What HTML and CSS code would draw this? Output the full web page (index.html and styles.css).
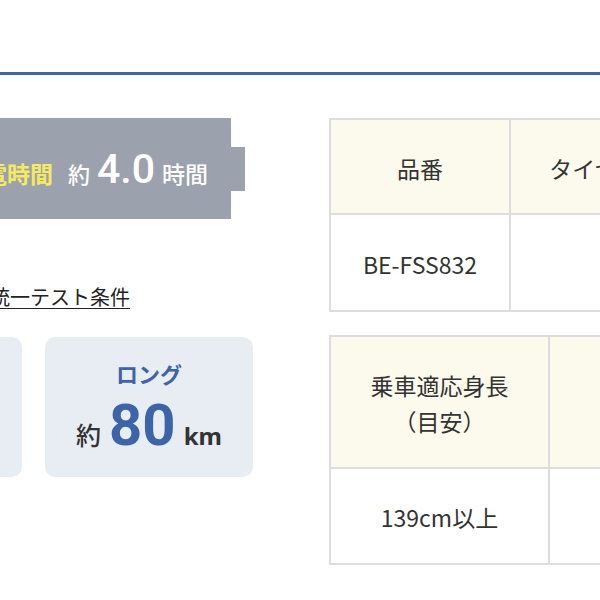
FILE: index.html
```html
<!DOCTYPE html>
<html lang="ja">
<head>
<meta charset="utf-8">
<title>スペック</title>
<link rel="stylesheet" href="styles.css">
</head>
<body>
<div class="topbar"></div>
<div class="main">
  <div class="left">
    <div class="battery">
      <div class="battery-body">
        <div class="battery-text">
          <span class="b-label">充電時間</span>
          <span class="b-about">約</span>
          <span class="b-num">4.0</span>
          <span class="b-unit">時間</span>
        </div>
      </div>
      <div class="battery-tip"></div>
    </div>
    <p class="note"><a class="note-link" href="#">自転車協会統一テスト条件</a></p>
    <div class="cards">
      <div class="card">
        <div class="card-title">オート</div>
        <div class="card-value"><span class="c-about">約</span><span class="c-num">60</span><span class="c-unit">km</span></div>
      </div>
      <div class="card">
        <div class="card-title">ロング</div>
        <div class="card-value"><span class="c-about">約</span><span class="c-num">80</span><span class="c-unit">km</span></div>
      </div>
    </div>
  </div>
  <div class="right">
    <table class="spec spec-1">
      <tr class="head"><td class="c1">品番</td><td class="c2">タイヤサイズ（インチ）</td></tr>
      <tr class="body"><td class="c1">BE-FSS832</td><td class="c2">26</td></tr>
    </table>
    <table class="spec spec-2">
      <tr class="head"><td class="c1">乗車適応身長<br>（目安）</td><td class="c2">車体重量</td></tr>
      <tr class="body"><td class="c1">139cm以上</td><td class="c2">25.9kg</td></tr>
    </table>
  </div>
</div>
</body>
</html>
```
FILE: styles.css
```css
html, body {
  margin: 0;
  padding: 0;
  overflow: hidden;
  background: #ffffff;
  font-family: "Noto Sans CJK JP", "Noto Sans", sans-serif;
  color: #333333;
}

.topbar {
  height: 72px;
  border-bottom: 3px solid #3d63a8;
}

.main {
  display: flex;
  align-items: flex-start;
  margin-left: -186px;
  padding-top: 43px;
}

.left {
  flex: none;
  width: 439px;
}

/* battery banner */
.battery {
  display: flex;
  align-items: center;
}

.battery-body {
  width: 417px;
  height: 101px;
  background: #9ba1ad;
  display: flex;
  align-items: center;
  justify-content: flex-end;
  padding-right: 23px;
  padding-top: 2px;
  box-sizing: border-box;
}

.battery-tip {
  width: 14px;
  height: 44px;
  background: #9ba1ad;
}

.battery-text {
  display: flex;
  align-items: baseline;
  color: #ffffff;
  line-height: 1;
}

.b-label {
  font-size: 23px;
  font-weight: 700;
  color: #f7ea5e;
  margin-right: 15px;
}

.b-about {
  font-size: 22px;
  font-weight: 500;
  margin-right: 7px;
}

.b-num {
  font-family: "Roboto", "Noto Sans", sans-serif;
  font-size: 41px;
  font-weight: 500;
  margin-right: 7px;
}

.b-unit {
  font-size: 23px;
  font-weight: 500;
}

/* note link */
.note {
  margin: 63px 0 0 0;
  padding-left: 76px;
  font-size: 20px;
  line-height: 30px;
}

.note-link {
  color: #222222;
  text-decoration: underline;
  text-underline-offset: 3px;
  text-decoration-thickness: 1px;
}

/* cards */
.cards {
  display: grid;
  grid-template-columns: 208px 208px;
  gap: 23px;
  margin-top: 25px;
}

.card {
  height: 140px;
  background: #e8edf4;
  border-radius: 10px;
  display: flex;
  flex-direction: column;
  align-items: center;
  padding-top: 25px;
  box-sizing: border-box;
}

.card-title {
  font-size: 22px;
  font-weight: 700;
  color: #3d63a8;
  line-height: 1;
}

.card-value {
  display: flex;
  align-items: baseline;
  margin-top: 12px;
  line-height: 1;
}

.c-about {
  font-size: 25px;
  font-weight: 500;
  color: #333333;
  margin-right: 8px;
}

.c-num {
  font-family: "Roboto", "Noto Sans", sans-serif;
  font-size: 58px;
  font-weight: 700;
  color: #3d63a8;
  margin-right: 8px;
}

.c-unit {
  font-family: "Noto Sans", "Roboto", sans-serif;
  font-size: 24px;
  font-weight: 700;
  color: #333333;
}

/* tables */
.right {
  flex: none;
  width: 600px;
  margin-left: 76px;
}

.spec {
  border-collapse: separate;
  border-spacing: 0;
  border-top: 2px solid #dddddd;
  border-left: 2px solid #dddddd;
  table-layout: fixed;
  font-size: 23px;
  color: #333333;
}

.spec td {
  border-right: 2px solid #dddddd;
  border-bottom: 2px solid #dddddd;
  padding: 2px 0 0 0;
  text-align: center;
  vertical-align: middle;
  box-sizing: border-box;
}

.spec .head td {
  background: #fcfaec;
}

.spec-1 .c1 { width: 180px; }
.spec-1 .c2 { width: 330px; }
.spec-1 .head td { height: 95px; }
.spec-1 .body td { height: 97px; }

.spec-2 {
  margin-top: 23px;
  line-height: 36px;
}
.spec-2 .c1 { width: 219px; }
.spec-2 .c2 { width: 330px; }
.spec-2 .head td { height: 132px; }
.spec-2 .body td { height: 96px; }
```
